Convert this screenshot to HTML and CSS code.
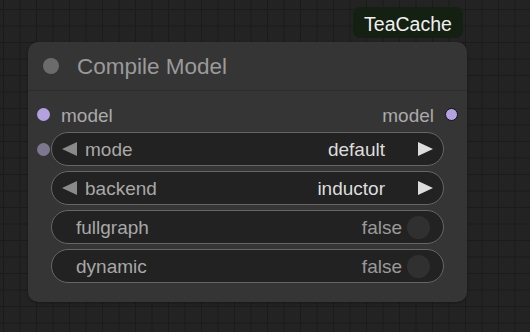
FILE: index.html
```html
<!DOCTYPE html>
<html lang="en">
<head>
  <meta charset="UTF-8">
  <title>Compile Model</title>
  <link rel="stylesheet" href="styles.css">
</head>
<body>
  <div class="canvas">
    <div class="badge">TeaCache</div>
    <div class="node">
      <div class="node-title">
        <span class="title-dot"></span>
        <span class="title-text">Compile Model</span>
      </div>
      <div class="node-body">
        <div class="slot-row">
          <div class="slot-in"><span class="dot dot-model"></span><span class="slot-label">model</span></div>
          <div class="slot-out"><span class="slot-label">model</span><span class="dot dot-model dot-out"></span></div>
        </div>

        <div class="widget-row">
          <div class="slot-side"><span class="dot dot-widget"></span></div>
          <div class="widget">
            <span class="arrow arrow-left"></span>
            <span class="w-label">mode</span>
            <span class="w-value">default</span>
            <span class="arrow arrow-right"></span>
          </div>
          <div class="slot-side"></div>
        </div>

        <div class="widget-row">
          <div class="slot-side"></div>
          <div class="widget">
            <span class="arrow arrow-left"></span>
            <span class="w-label">backend</span>
            <span class="w-value">inductor</span>
            <span class="arrow arrow-right"></span>
          </div>
          <div class="slot-side"></div>
        </div>

        <div class="widget-row">
          <div class="slot-side"></div>
          <div class="widget toggle">
            <span class="w-label">fullgraph</span>
            <span class="w-bool">false</span>
            <span class="knob"></span>
          </div>
          <div class="slot-side"></div>
        </div>

        <div class="widget-row">
          <div class="slot-side"></div>
          <div class="widget toggle">
            <span class="w-label">dynamic</span>
            <span class="w-bool">false</span>
            <span class="knob"></span>
          </div>
          <div class="slot-side"></div>
        </div>
      </div>
    </div>
  </div>
</body>
</html>
```

FILE: styles.css
```css
html, body { margin: 0; height: 100%; }
body {
  font-family: "Liberation Sans", Arial, sans-serif;
  background-color: #232323;
  background-image:
    linear-gradient(90deg, #1b1b1b 1px, transparent 1px),
    linear-gradient(180deg, #1b1b1b 1px, transparent 1px);
  background-size: 16.5px 16.5px;
  background-position: 3px 9px;
  overflow: hidden;
}

.canvas { width: 439px; padding: 7px 0 0 28px; display: flex; flex-direction: column; align-items: flex-end; }

.badge {
  margin-right: 4px;
  height: 31px; box-sizing: border-box;
  padding: 3px 10px 0;
  line-height: 28px;
  width: 110px; text-align: center;
  background: #142012; color: #f0f0f0;
  font-size: 19.5px; border-radius: 7px;
}

.node {
  margin-top: 4px;
  width: 439px; height: 260px;
  background: #353535;
  border-radius: 10px;
  box-shadow: 0 1px 3px rgba(0,0,0,0.35);
}

.node-title {
  height: 48px;
  display: flex; align-items: center;
  border-bottom: 1px solid #2c2c2c;
}
.title-dot { width: 16px; height: 16px; border-radius: 50%; background: #6b6b6b; margin-left: 15px; }
.title-text { margin-left: 18px; padding-top: 2px; color: #9a9a9a; font-size: 22.5px; }

.node-body { padding-top: 7px; }

.slot-row { height: 32px; display: flex; align-items: center; justify-content: space-between; margin-bottom: 2px; }
.slot-in, .slot-out { display: flex; align-items: center; }
.slot-in .dot { margin-left: 9px; margin-right: 11px; }
.slot-out .dot { margin-left: 11px; margin-right: 9px; }
.slot-label { color: #aaaaaa; font-size: 19px; padding-top: 3px; }

.dot { width: 13px; height: 13px; border-radius: 50%; box-sizing: border-box; }
.dot-model { background: #b3a1e0; }
.dot-out { border: 1.5px solid #111; }
.dot-widget { background: #7d7890; }

.widget-row { display: flex; align-items: center; height: 34px; margin-bottom: 5px; }
.slot-side { width: 23px; display: flex; }
.slot-side .dot { margin-left: 9px; }

.widget {
  flex: 1; height: 34px; box-sizing: border-box;
  display: flex; align-items: center;
  background: #222222;
  border: 1px solid #666666;
  border-radius: 17px;
  padding: 0 10px 0 10px;
  font-size: 19px;
}
.w-label { color: #a8a8a8; margin-left: 8px; padding-top: 2px; }
.w-value { margin-left: auto; color: #dddddd; margin-right: 33px; padding-top: 2px; }
.w-bool { margin-left: auto; color: #9a9a9a; margin-right: 5px; padding-top: 2px; }

.arrow { width: 0; height: 0; border-top: 7.5px solid transparent; border-bottom: 7.5px solid transparent; }
.arrow-left { border-right: 15px solid #8a8a8a; }
.arrow-right { border-left: 15px solid #dddddd; }

.toggle { padding-left: 16px; padding-right: 13px; }
.toggle .w-label { margin-left: 8px; }
.knob { width: 23px; height: 23px; border-radius: 50%; background: #303030; }
```
